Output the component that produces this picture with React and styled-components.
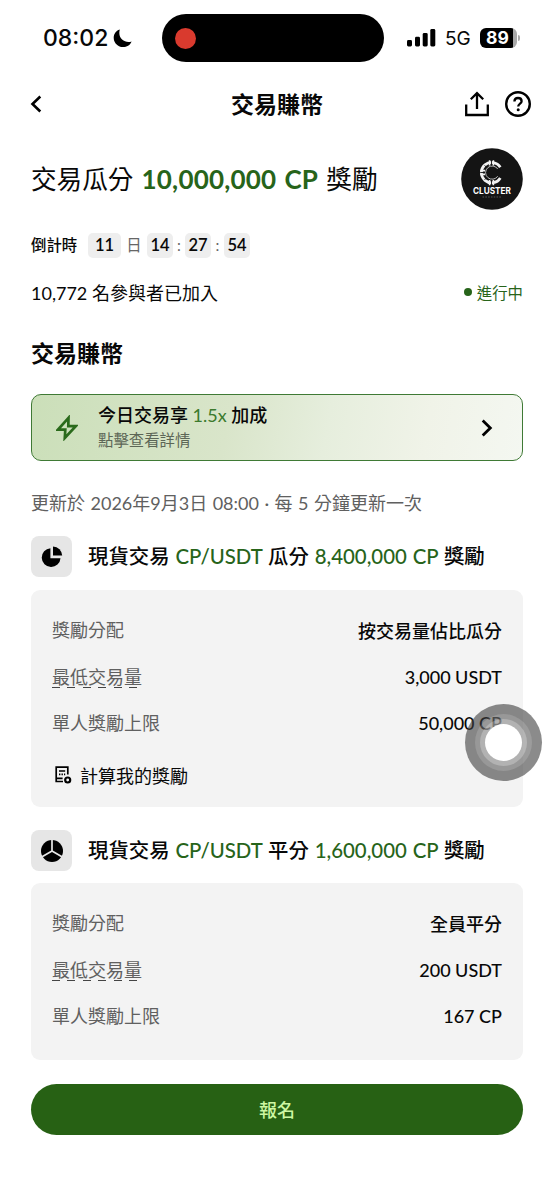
import React from "react";
import styled, { createGlobalStyle } from "styled-components";

const App = () => {
  return (
    <>
      <GlobalStyle />
      <Screen>
        <StatusBar>
          <Clock>
            08:02
            <MoonIcon />
          </Clock>
          <Island>
            <RecordDot />
          </Island>
          <StatusRight>
            <SignalIcon />
            <Network>5G</Network>
            <Battery>
              <BatteryBody>89</BatteryBody>
              <BatteryTip />
            </Battery>
          </StatusRight>
        </StatusBar>

        <Header>
          <BackIcon />
          <PageTitle>交易賺幣</PageTitle>
          <HeaderIcons>
            <ShareIcon />
            <HelpIcon />
          </HeaderIcons>
        </Header>

        <Content>
          <Hero>
            <HeroTitle>
              交易瓜分 <HeroAmount>10,000,000 CP</HeroAmount> 獎勵
            </HeroTitle>
            <ClusterLogo />
          </Hero>

          <Countdown>
            <CountLabel>倒計時</CountLabel>
            <TimeBox $width={33}>11</TimeBox>
            <TimeUnit $width={26}>日</TimeUnit>
            <TimeBox $width={26}>14</TimeBox>
            <TimeUnit $width={12}>:</TimeUnit>
            <TimeBox $width={26}>27</TimeBox>
            <TimeUnit $width={13}>:</TimeUnit>
            <TimeBox $width={26}>54</TimeBox>
          </Countdown>

          <JoinRow>
            <span>10,772 名參與者已加入</span>
            <Ongoing>
              <OngoingDot />
              進行中
            </Ongoing>
          </JoinRow>

          <SectionTitle>交易賺幣</SectionTitle>

          <Banner>
            <BoltIcon />
            <BannerText>
              <BannerTitle>
                今日交易享 <Rate>1.5x</Rate> 加成
              </BannerTitle>
              <BannerSub>點擊查看詳情</BannerSub>
            </BannerText>
            <ChevronIcon />
          </Banner>

          <UpdateText>更新於 2026年9月3日 08:00 · 每 5 分鐘更新一次</UpdateText>

          <PoolHead>
            <IconTile>
              <PieIcon />
            </IconTile>
            <PoolTitle>
              現貨交易 <Green>CP/USDT</Green> 瓜分 <Green>8,400,000 CP</Green> 獎勵
            </PoolTitle>
          </PoolHead>
          <Card $height={217}>
            <InfoRow label="獎勵分配" value="按交易量佔比瓜分" />
            <InfoRow label="最低交易量" value="3,000 USDT" dashed />
            <InfoRow label="單人獎勵上限" value="50,000 CP" />
            <CalcLink>
              <CalcIcon />
              計算我的獎勵
            </CalcLink>
          </Card>

          <PoolHead $top={23}>
            <IconTile>
              <ThirdsIcon />
            </IconTile>
            <PoolTitle>
              現貨交易 <Green>CP/USDT</Green> 平分 <Green>1,600,000 CP</Green> 獎勵
            </PoolTitle>
          </PoolHead>
          <Card $top={12} $height={177}>
            <InfoRow label="獎勵分配" value="全員平分" />
            <InfoRow label="最低交易量" value="200 USDT" dashed />
            <InfoRow label="單人獎勵上限" value="167 CP" />
          </Card>

          <JoinButton>報名</JoinButton>
        </Content>

        <AssistiveTouch>
          <TouchRing>
            <TouchInner>
              <TouchCore />
            </TouchInner>
          </TouchRing>
        </AssistiveTouch>
      </Screen>
    </>
  );
};

export default App;

const InfoRow = ({ label, value, dashed }) => {
  return (
    <Row>
      <Label>
        {label}
        {dashed && <Dashes />}
      </Label>
      <Value>{value}</Value>
    </Row>
  );
};

const MoonIcon = () => (
  <svg width="19" height="19" viewBox="0 0 19 19">
    <path
      d="M6.8 0.6C0.6 2.6 -1 9.6 2.6 14.4C7 20 16 19 18.6 12.4C12.4 14.6 4.2 10 6.8 0.6Z"
      fill="#000"
    />
  </svg>
);

const SignalIcon = () => (
  <svg width="29" height="18" viewBox="0 0 29 18">
    <rect x="0" y="11" width="5" height="6.5" rx="1.4" />
    <rect x="8" y="7.8" width="5" height="9.7" rx="1.4" />
    <rect x="15.7" y="4" width="5" height="13.5" rx="1.4" />
    <rect x="23.3" y="0" width="5" height="17.5" rx="1.4" />
  </svg>
);

const BackIcon = () => (
  <svg width="12" height="18" viewBox="0 0 12 18" fill="none">
    <path d="M10.3 1.5L2.5 9L10.3 16.5" stroke="#000" strokeWidth="2.6" />
  </svg>
);

const ShareIcon = () => (
  <svg width="24" height="26" viewBox="0 0 24 26" fill="none">
    <path
      d="M1.2 13.5V24H22.8V13.5M12 18V2.5M5.8 8.3L12 2.1L18.2 8.3"
      stroke="#000"
      strokeWidth="2.3"
    />
  </svg>
);

const HelpIcon = () => (
  <svg width="26" height="26" viewBox="0 0 26 26" fill="none">
    <circle cx="13" cy="13" r="11.8" stroke="#000" strokeWidth="2.4" />
    <path
      d="M9.4 10.6C9.4 8.3 11 7 13 7S16.6 8.3 16.6 10.2C16.6 12.6 13.2 12.6 13.2 15.6"
      stroke="#000"
      strokeWidth="2.3"
    />
    <circle cx="13.2" cy="18.7" r="1.5" fill="#000" />
  </svg>
);

const ClusterLogo = () => (
  <svg width="62" height="62" viewBox="0 0 62 62">
    <circle cx="31" cy="31" r="30.8" fill="#141414" />
    <g fill="none" stroke="#f2f2f2">
      <path d="M39.3 19.3A10.2 10.2 0 1 0 39.3 29.9" strokeWidth="2.8" />
      <path
        d="M36.7 21A6.6 6.6 0 1 0 36.7 28.2"
        strokeWidth="1"
        stroke="#bbb"
      />
      <path
        d="M28.6 12.3V17.5M32.4 12.3V17.5M28.6 32V37.2M32.4 32V37.2M19.4 22.6H24M19.4 26.4H24"
        strokeWidth="1.6"
      />
    </g>
    <path
      d="M30.5 12V17.5M30.5 31.7V37.4M19.2 24.5H24M23.6 17.3L26 19.8M23.6 31.8L26 29.4"
      stroke="#141414"
      strokeWidth="0.9"
    />
    <LogoName x="31" y="46.3" textLength="38" lengthAdjust="spacingAndGlyphs">
      CLUSTER
    </LogoName>
    <path
      d="M21.5 49H41"
      stroke="#555"
      strokeWidth="1"
      strokeDasharray="1.6 1.2"
    />
  </svg>
);

const BoltIcon = () => (
  <svg width="22" height="26" viewBox="0 0 22 26" fill="none">
    <path
      d="M12.5 2.8L2 14.6H9.3L8.8 23L19.8 11.2H12.3Z"
      stroke="#2a6a1b"
      strokeWidth="2.7"
    />
  </svg>
);

const ChevronIcon = () => (
  <svg width="12" height="18" viewBox="0 0 12 18" fill="none">
    <path d="M1.7 1.6L9.3 9L1.7 16.4" stroke="#000" strokeWidth="2.8" />
  </svg>
);

const PieIcon = () => (
  <svg width="22" height="22" viewBox="0 0 22 22">
    <path d="M9.4 2.2A9.4 9.4 0 1 0 19.5 12.2H9.4Z" />
    <path d="M12 0.4V9.6H21.2A9.4 9.4 0 0 0 12 0.4Z" />
  </svg>
);

const ThirdsIcon = () => (
  <svg width="24" height="24" viewBox="0 0 24 24">
    <circle cx="12" cy="12" r="11" />
    <path
      d="M12 0V12L1.2 18.2M12 12L22.8 18.2"
      fill="none"
      stroke="#e6e6e6"
      strokeWidth="1.7"
    />
  </svg>
);

const CalcIcon = () => (
  <svg width="17" height="18" viewBox="0 0 17 18" fill="none">
    <path
      d="M8 15.5H1.2V1.2H12.8V8.4M4 5H10.2M4 8.4H5.4M6.5 8.4H7.9M9 8.4H10.2M1.2 12.4H7.6"
      stroke="#000"
      strokeWidth="1.7"
    />
    <circle cx="12.7" cy="14" r="2.5" stroke="#000" strokeWidth="2.2" />
  </svg>
);

const GlobalStyle = createGlobalStyle`
  * {
    box-sizing: border-box;
  }
  body {
    margin: 0;
    background-color: #fff;
  }
  svg {
    display: block;
    flex: none;
  }
`;

const Screen = styled.div`
  position: relative;
  width: 554px;
  height: 1200px;
  overflow: hidden;
  background-color: #fff;
  color: #080808;
  font-family: Lato, "Noto Sans CJK TC", sans-serif;
  font-size: 18px;
  white-space: nowrap;
`;

const StatusBar = styled.div`
  display: grid;
  grid-template-columns: 162px 222px 1fr;
  align-items: center;
  height: 76px;
`;

const Clock = styled.div`
  display: flex;
  align-items: center;
  gap: 5px;
  padding-left: 43px;
  font-family: Inter, sans-serif;
  font-size: 23px;
  font-weight: 500;
  line-height: 26px;
`;

const Island = styled.div`
  display: flex;
  align-items: center;
  height: 48px;
  padding-left: 12.5px;
  border-radius: 24px;
  background-color: #000;
`;

const RecordDot = styled.div`
  width: 21px;
  height: 21px;
  border-radius: 50%;
  background-color: #d93a2e;
`;

const StatusRight = styled.div`
  display: flex;
  align-items: center;
  padding-left: 23px;
`;

const Network = styled.span`
  width: 44px;
  padding-left: 9px;
  font-family: Inter, sans-serif;
  font-size: 19px;
`;

const Battery = styled.div`
  display: flex;
  align-items: center;
  gap: 1px;
`;

const BatteryBody = styled.div`
  width: 37px;
  height: 20px;
  padding-right: 2px;
  border-radius: 6px;
  background: linear-gradient(90deg, #000 33px, #aaa 33px);
  color: #fff;
  font-family: Inter, sans-serif;
  font-size: 17.5px;
  font-weight: 700;
  line-height: 20px;
  text-align: center;
`;

const BatteryTip = styled.div`
  width: 2px;
  height: 6px;
  border-radius: 0 2px 2px 0;
  background-color: #aaa;
`;

const Header = styled.header`
  display: grid;
  grid-template-columns: 1fr auto 1fr;
  align-items: center;
  height: 56px;
  padding: 0 23px 0 30px;
`;

const PageTitle = styled.h1`
  margin: 0 7px 1px 0;
  font-size: 23px;
  font-weight: 700;
  line-height: 34px;
`;

const HeaderIcons = styled.div`
  display: flex;
  justify-content: flex-end;
  gap: 16px;
`;

const Content = styled.main`
  display: flex;
  flex-direction: column;
  padding: 16px 31px 0;
`;

const Hero = styled.div`
  display: flex;
  align-items: center;
  justify-content: space-between;
  height: 62px;
`;

const HeroTitle = styled.h2`
  margin: 0;
  font-size: 25.6px;
  font-weight: 400;
  line-height: 38px;
  word-spacing: 1.6px;
`;

const HeroAmount = styled.span`
  color: #27641a;
  font-size: 26px;
  font-weight: 700;
  letter-spacing: 0.2px;
`;

const LogoName = styled.text`
  fill: #fff;
  font-family: Inter, sans-serif;
  font-size: 9px;
  font-weight: 700;
  text-anchor: middle;
`;

const Countdown = styled.div`
  display: flex;
  align-items: center;
  height: 25px;
  margin-top: 23px;
`;

const CountLabel = styled.span`
  width: 57px;
  font-size: 15.4px;
  font-weight: 500;
  line-height: 23px;
`;

const TimeBox = styled.span`
  width: ${(props) => props.$width}px;
  height: 25px;
  border-radius: 5px;
  background-color: #eee;
  font-size: 16.5px;
  font-weight: 600;
  line-height: 25px;
  text-align: center;
`;

const TimeUnit = styled.span`
  width: ${(props) => props.$width}px;
  color: #666;
  font-size: 15.4px;
  line-height: 23px;
  text-align: center;
`;

const JoinRow = styled.div`
  display: flex;
  align-items: center;
  justify-content: space-between;
  height: 28px;
  margin-top: 20px;
`;

const Ongoing = styled.span`
  display: flex;
  align-items: center;
  gap: 5px;
  color: #27641a;
  font-size: 15.4px;
`;

const OngoingDot = styled.i`
  width: 8px;
  height: 8px;
  border-radius: 50%;
  background-color: #27641a;
`;

const SectionTitle = styled.h3`
  margin: 30px 0 0;
  font-size: 23px;
  font-weight: 700;
  line-height: 34px;
`;

const Banner = styled.div`
  display: flex;
  align-items: center;
  height: 67px;
  margin-top: 24px;
  padding: 0 29px 0 24px;
  border: 1.5px solid #3f7a35;
  border-radius: 10px;
  background: linear-gradient(100deg, #cbdfb9 0%, #d9e5ca 40%, #e6eedd 60%, #f0f3e8 80%, #f4f7f1 100%);
`;

const BannerText = styled.div`
  flex: 1;
  padding: 0 0 2px 20px;
`;

const BannerTitle = styled.div`
  font-weight: 500;
  line-height: 26px;
`;

const Rate = styled.span`
  color: #3b7a2e;
  font-weight: 400;
`;

const BannerSub = styled.div`
  color: #5c6656;
  font-size: 15.4px;
  line-height: 24px;
`;

const UpdateText = styled.div`
  height: 28px;
  margin-top: 28px;
  color: #606060;
  line-height: 28px;
  word-spacing: 0.9px;
`;

const PoolHead = styled.div`
  display: flex;
  align-items: center;
  gap: 16px;
  height: 41px;
  margin-top: ${(props) => props.$top || 19}px;
`;

const IconTile = styled.div`
  display: flex;
  align-items: center;
  justify-content: center;
  width: 41px;
  height: 41px;
  border-radius: 8px;
  background-color: #e6e6e6;
`;

const PoolTitle = styled.h4`
  margin: 0 0 1px;
  font-size: 20.4px;
  font-weight: 500;
  line-height: 30px;
  word-spacing: 0.7px;
`;

const Green = styled.span`
  color: #27641a;
`;

const Card = styled.section`
  height: ${(props) => props.$height}px;
  margin-top: ${(props) => props.$top || 13}px;
  padding: 17px 21px 0;
  border-radius: 9px;
  background-color: #f3f3f3;
`;

const Row = styled.div`
  display: flex;
  align-items: center;
  justify-content: space-between;
  height: 46.5px;
`;

const Label = styled.span`
  color: #606060;
  line-height: 28px;
`;

const Dashes = styled.i`
  display: block;
  height: 1.5px;
  margin-top: -4px;
  margin-bottom: 3px;
  background: repeating-linear-gradient(90deg, #444 0 8px, transparent 8px 15.4px);
`;

const Value = styled.span`
  font-weight: 500;
`;

const CalcLink = styled.div`
  display: flex;
  align-items: center;
  gap: 8px;
  height: 46px;
  margin-top: 5px;
  padding-left: 3px;
`;

const JoinButton = styled.button`
  height: 51px;
  margin-top: 24px;
  padding-bottom: 3px;
  border: none;
  border-radius: 26px;
  background-color: #276114;
  color: #cdf7a2;
  font-family: inherit;
  font-size: 18px;
  font-weight: 500;
`;

const AssistiveTouch = styled.div`
  position: absolute;
  top: 704px;
  left: 465px;
  display: flex;
  align-items: center;
  justify-content: center;
  width: 77px;
  height: 77px;
  border-radius: 50%;
  background-color: rgba(61, 61, 61, 0.6);
`;

const TouchRing = styled.div`
  display: flex;
  align-items: center;
  justify-content: center;
  width: 57px;
  height: 57px;
  border-radius: 50%;
  background-color: rgba(255, 255, 255, 0.15);
`;

const TouchInner = styled.div`
  display: flex;
  align-items: center;
  justify-content: center;
  width: 47px;
  height: 47px;
  border-radius: 50%;
  background-color: rgba(255, 255, 255, 0.25);
`;

const TouchCore = styled.div`
  width: 37px;
  height: 37px;
  border-radius: 50%;
  background-color: #fff;
`;
